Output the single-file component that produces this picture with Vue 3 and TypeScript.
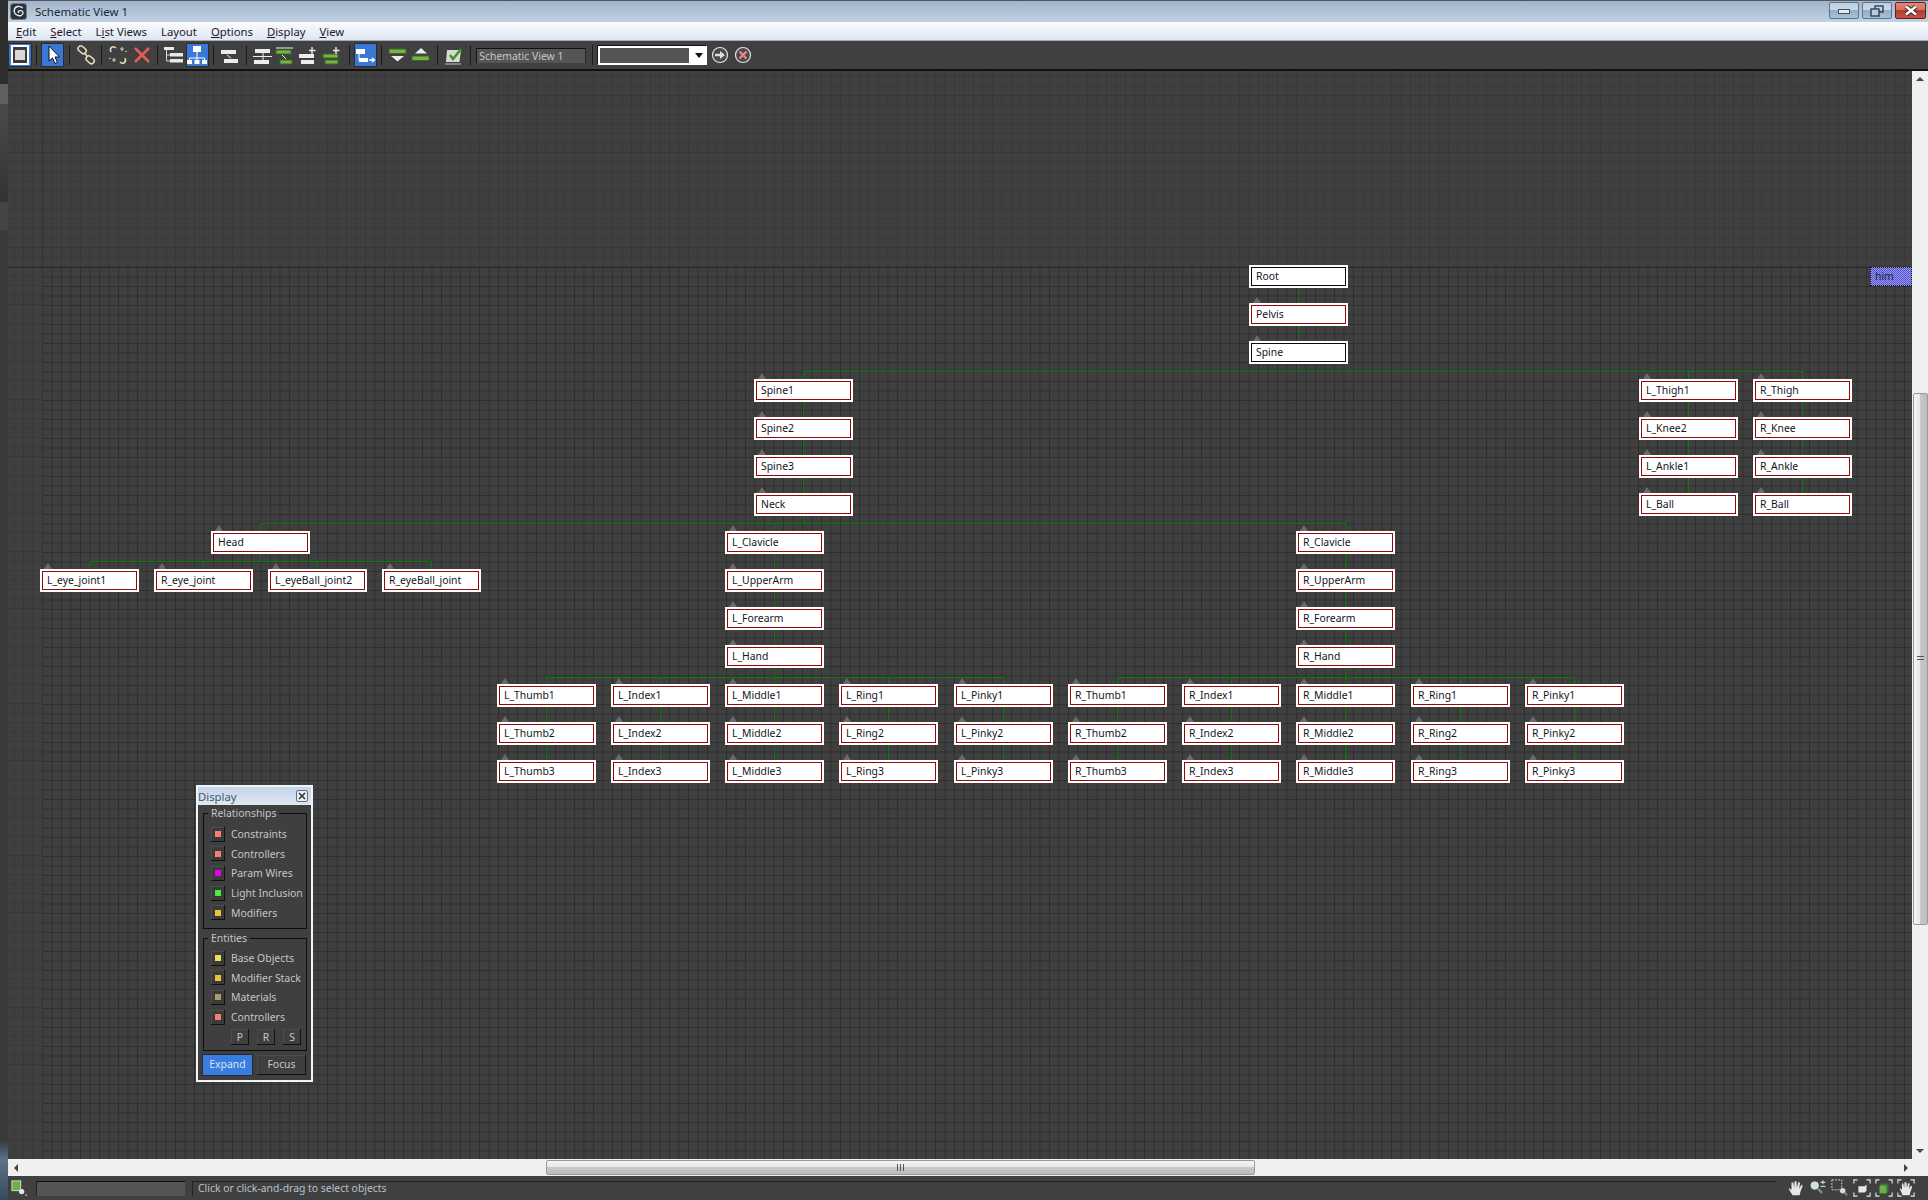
<script setup lang="ts">
interface SchematicNode {
  name: string
  x: number
  row: number
  sel?: boolean
}

// node column pitch is about 114px in the view
const colX = (n: number) => Math.floor(497 + 114.25 * n)
const rows = [265, 303, 341, 379, 417, 455, 493, 531, 569, 607, 645, 684, 722, 760]
const rowY = (k: number) => rows[k]

const nodes: SchematicNode[] = [
  { name: 'Root', x: 1249, row: 0 },
  { name: 'Pelvis', x: 1249, row: 1, sel: true },
  { name: 'Spine', x: 1249, row: 2 },
  { name: 'Spine1', x: 754, row: 3, sel: true },
  { name: 'Spine2', x: 754, row: 4, sel: true },
  { name: 'Spine3', x: 754, row: 5, sel: true },
  { name: 'Neck', x: 754, row: 6, sel: true },
  { name: 'L_Thigh1', x: colX(10), row: 3, sel: true },
  { name: 'L_Knee2', x: colX(10), row: 4, sel: true },
  { name: 'L_Ankle1', x: colX(10), row: 5, sel: true },
  { name: 'L_Ball', x: colX(10), row: 6, sel: true },
  { name: 'R_Thigh', x: colX(11), row: 3, sel: true },
  { name: 'R_Knee', x: colX(11), row: 4, sel: true },
  { name: 'R_Ankle', x: colX(11), row: 5, sel: true },
  { name: 'R_Ball', x: colX(11), row: 6, sel: true },
  { name: 'Head', x: colX(-2.5), row: 7, sel: true },
  { name: 'L_eye_joint1', x: colX(-4), row: 8, sel: true },
  { name: 'R_eye_joint', x: colX(-3), row: 8, sel: true },
  { name: 'L_eyeBall_joint2', x: colX(-2), row: 8, sel: true },
  { name: 'R_eyeBall_joint', x: colX(-1), row: 8, sel: true },
  { name: 'L_Clavicle', x: colX(2), row: 7, sel: true },
  { name: 'L_UpperArm', x: colX(2), row: 8, sel: true },
  { name: 'L_Forearm', x: colX(2), row: 9, sel: true },
  { name: 'L_Hand', x: colX(2), row: 10, sel: true },
  { name: 'R_Clavicle', x: colX(7), row: 7, sel: true },
  { name: 'R_UpperArm', x: colX(7), row: 8, sel: true },
  { name: 'R_Forearm', x: colX(7), row: 9, sel: true },
  { name: 'R_Hand', x: colX(7), row: 10, sel: true },
]

const fingers = ['L_Thumb', 'L_Index', 'L_Middle', 'L_Ring', 'L_Pinky', 'R_Thumb', 'R_Index', 'R_Middle', 'R_Ring', 'R_Pinky']
fingers.forEach((f, i) => {
  for (let j = 0; j < 3; j++) {
    nodes.push({ name: f + (j + 1), x: colX(i), row: 11 + j, sel: true })
  }
})

// canvas starts at 8,71 so everything is shifted by that
const nodeStyle = (n: SchematicNode) => ({
  left: n.x - 8 + 'px',
  top: rowY(n.row) - 71 + 'px',
})

interface Wire {
  x: number
  y: number
  w: number
  h: number
}

const wires: Wire[] = []
const center = (x: number) => x + 49

// vertical links inside each chain
const vLink = (x: number, from: number, to: number) => {
  wires.push({ x: center(x), y: rowY(from) + 23, w: 1, h: rowY(to) - rowY(from) - 23 })
}

// parent drops onto a horizontal bus, children hang off it
const fan = (parentX: number, parentRow: number, childXs: number[], childRow: number, offset: number) => {
  const busY = rowY(parentRow) + offset
  const xs = [...childXs].sort((a, b) => a - b)
  wires.push({ x: center(parentX), y: rowY(parentRow) + 23, w: 1, h: offset - 23 })
  wires.push({ x: center(xs[0]), y: busY, w: xs[xs.length - 1] - xs[0] + 1, h: 1 })
  xs.forEach((x) => wires.push({ x: center(x), y: busY, w: 1, h: rowY(childRow) - busY }))
}

vLink(1249, 0, 1)
vLink(1249, 1, 2)
;[754, colX(10), colX(11)].forEach((x) => [3, 4, 5].forEach((k) => vLink(x, k, k + 1)))
;[colX(2), colX(7)].forEach((x) => [7, 8, 9].forEach((k) => vLink(x, k, k + 1)))
for (let i = 0; i < 10; i++) {
  vLink(colX(i), 11, 12)
  vLink(colX(i), 12, 13)
}
fan(1249, 2, [754, colX(10), colX(11)], 3, 30)
fan(754, 6, [colX(-2.5), colX(2), colX(7)], 7, 30)
fan(colX(-2.5), 7, [colX(-4), colX(-3), colX(-2), colX(-1)], 8, 30)
fan(colX(2), 10, [0, 1, 2, 3, 4].map(colX), 11, 32)
fan(colX(7), 10, [5, 6, 7, 8, 9].map(colX), 11, 32)

const wireStyle = (w: Wire) => ({
  left: w.x - 8 + 'px',
  top: w.y - 71 + 'px',
  width: w.w + 'px',
  height: w.h + 'px',
})

const relationships = [
  { label: 'Constraints', color: '#f97c74' },
  { label: 'Controllers', color: '#f97c74' },
  { label: 'Param Wires', color: '#e800e8' },
  { label: 'Light Inclusion', color: '#44f03c' },
  { label: 'Modifiers', color: '#e8c238' },
]

const entities = [
  { label: 'Base Objects', color: '#ecdc60' },
  { label: 'Modifier Stack', color: '#e8c238' },
  { label: 'Materials', color: '#a89a6c' },
  { label: 'Controllers', color: '#f97c74' },
]

const menus = [
  { key: 'E', rest: 'dit', pre: '' },
  { key: 'S', rest: 'elect', pre: '' },
  { key: 'i', rest: 'st Views', pre: 'L' },
  { key: '', rest: 'Layout', pre: '' },
  { key: 'O', rest: 'ptions', pre: '' },
  { key: 'D', rest: 'isplay', pre: '' },
  { key: 'V', rest: 'iew', pre: '' },
]
</script>

<template>
  <div class="screen">
    <div class="backdrop"></div>
    <div class="window">
      <div class="titlebar">
        <svg class="app-icon" viewBox="0 0 18 18">
          <rect x="0.5" y="0.5" width="17" height="17" rx="3" fill="#2c3238" stroke="#70808c" />
          <path d="M13.5 5.5 C11 2.5 5 3 4.5 7.5 C4 12 8.5 14.5 12 13 C15 11.5 14 8 11 8 C9 8 8 9.5 9.5 10.5" fill="none" stroke="#e8eef2" stroke-width="1.4" />
        </svg>
        <span class="title">Schematic View 1</span>
        <div class="win-btns">
          <div class="win-btn">
            <svg width="12" height="8" viewBox="0 0 12 8"><rect x="0.5" y="2.5" width="11" height="4" fill="#e8ecf0" stroke="#42505e" /></svg>
          </div>
          <div class="win-btn">
            <svg width="14" height="12" viewBox="0 0 14 12" fill="none" stroke="#34404c" stroke-width="1.4"><rect x="5" y="1" width="8" height="6" /><rect x="1" y="4" width="8" height="7" fill="#b8cde0" /></svg>
          </div>
          <div class="win-btn close">
            <svg width="14" height="11" viewBox="0 0 14 11"><path d="M2 1.5 L12 9.5 M12 1.5 L2 9.5" stroke="#3a2020" stroke-width="4.4" /><path d="M2 1.5 L12 9.5 M12 1.5 L2 9.5" stroke="#fff" stroke-width="2.6" /></svg>
          </div>
        </div>
      </div>

      <div class="menubar">
        <span v-for="m in menus" :key="m.rest" class="menu-item">{{ m.pre }}<u v-if="m.key">{{ m.key }}</u>{{ m.rest }}</span>
      </div>

      <div class="toolbar">
        <button class="tool on">
          <svg viewBox="0 0 24 24"><rect x="4" y="3" width="16" height="18" fill="#3c3c3c" stroke="#fff" stroke-width="2" /><rect x="7" y="7" width="10" height="10" fill="#d8d8d8" /></svg>
        </button>
        <i class="sep"></i>
        <button class="tool on">
          <svg viewBox="0 0 24 24"><path d="M8 3 L8 18 L11.5 15 L14 20.5 L16.5 19.5 L14 14 L18.5 14 Z" fill="#fff" stroke="#111" /></svg>
        </button>
        <i class="sep"></i>
        <button class="tool">
          <svg viewBox="0 0 24 24" fill="none" stroke="#e8dcbc" stroke-width="1.5"><rect x="3.5" y="4" width="9" height="5.5" rx="2.7" transform="rotate(40 8 7)" /><rect x="11.5" y="14" width="9" height="5.5" rx="2.7" transform="rotate(40 16 17)" /><path d="M10.5 9.5 L13.5 14" /></svg>
        </button>
        <i class="sep"></i>
        <button class="tool">
          <svg viewBox="0 0 24 24" fill="none" stroke="#e8dcbc" stroke-width="1.5"><path d="M10 5 C7 2 3 5 5 9" /><path d="M14 19 C17 22 21 19 19 15" /><path d="M4 15 L4 16 M20 8 L20 9" /><path d="M14 6 h4 M16 4 v4 M6 17 h4 M8 15 v4" stroke="#c8c8c8" stroke-width="1.2" /></svg>
        </button>
        <button class="tool">
          <svg viewBox="0 0 24 24"><path d="M5 5 L19 19 M19 5 L5 19" stroke="#e65c5c" stroke-width="2.6" /></svg>
        </button>
        <i class="sep"></i>
        <button class="tool">
          <svg viewBox="0 0 24 24"><path d="M4.5 6 V18 H8 M4.5 12 H8" stroke="#d8d8d8" fill="none" /><rect x="2" y="4" width="10" height="3" fill="#e8e8e8" /><rect x="8" y="10" width="13" height="3.5" fill="#e8e8e8" /><rect x="8" y="16" width="13" height="3.5" fill="#e8e8e8" /></svg>
        </button>
        <button class="tool on">
          <svg viewBox="0 0 24 24"><path d="M12 8 V15 M4.5 18 V15 H19.5 V18 M12 15 V18" stroke="#fff" fill="none" /><rect x="8" y="3" width="8" height="6" fill="#fff" /><rect x="2" y="17" width="5" height="4" fill="#fff" /><rect x="9.5" y="17" width="5" height="4" fill="#fff" /><rect x="17" y="17" width="5" height="4" fill="#fff" /></svg>
        </button>
        <i class="sep"></i>
        <button class="tool">
          <svg viewBox="0 0 24 24"><rect x="3" y="7" width="15" height="4" fill="#ececec" /><rect x="6" y="16" width="14" height="4" fill="#ececec" /><path d="M9 12 L13 15" stroke="#ececec" /></svg>
        </button>
        <i class="sep"></i>
        <button class="tool">
          <svg viewBox="0 0 24 24"><rect x="4" y="6" width="15" height="4" fill="#ececec" /><path d="M2 13.5 H21" stroke="#ececec" /><path d="M12 10 V17" stroke="#ececec" /><rect x="3" y="17" width="15" height="4" fill="#ececec" /></svg>
        </button>
        <button class="tool">
          <svg viewBox="0 0 24 24"><path d="M2 5 H19" stroke="#ececec" /><rect x="2" y="7" width="15" height="4" fill="#7fb048" stroke="#2f6a20" /><path d="M8 12 L12 16" stroke="#ececec" /><rect x="6" y="17" width="12" height="4" fill="#7fb048" stroke="#2f6a20" /></svg>
        </button>
        <button class="tool">
          <svg viewBox="0 0 24 24"><rect x="2" y="11" width="15" height="4" fill="#ececec" /><rect x="4" y="17" width="13" height="4" fill="#ececec" /><path d="M15 4 V11 M12 7.5 H18.5" stroke="#ececec" stroke-width="1.4" /></svg>
        </button>
        <button class="tool">
          <svg viewBox="0 0 24 24"><rect x="2" y="11" width="15" height="4" fill="#7fb048" stroke="#2f6a20" /><rect x="4" y="17" width="13" height="4" fill="#7fb048" stroke="#2f6a20" /><path d="M15 4 V11 M12 7.5 H18.5" stroke="#ececec" stroke-width="1.4" /></svg>
        </button>
        <i class="sep"></i>
        <button class="tool on">
          <svg viewBox="0 0 24 24"><rect x="3" y="6" width="9" height="5" fill="#fff" /><path d="M6 11 V17" stroke="#fff" /><rect x="6" y="15" width="9" height="4" fill="#fff" /><path d="M16 17 H21 M19 15 L21.5 17 L19 19" fill="none" stroke="#fff" stroke-width="1.4" /></svg>
        </button>
        <i class="sep"></i>
        <button class="tool">
          <svg viewBox="0 0 24 24"><rect x="3" y="6" width="17" height="4.5" fill="#7fb048" stroke="#2f6a20" /><path d="M5 13 H18 L11.5 18.5 Z" fill="#ececec" /></svg>
        </button>
        <button class="tool">
          <svg viewBox="0 0 24 24"><path d="M12 5 L18 10.5 H6 Z" fill="#ececec" /><rect x="3" y="13" width="17" height="4.5" fill="#7fb048" stroke="#2f6a20" /></svg>
        </button>
        <i class="sep"></i>
        <button class="tool">
          <svg viewBox="0 0 24 24"><path d="M5 7 H19 L17.5 19 H4 Z" fill="#d8d8d8" /><path d="M3 21 H19" stroke="#bcbcbc" /><path d="M8 12 L11 16 L19 6" fill="none" stroke="#2f9a1c" stroke-width="2.4" /></svg>
        </button>
        <i class="sep"></i>
        <div class="name-field">Schematic View 1</div>
        <i class="sep"></i>
        <div class="combo">
          <div class="combo-inner"></div>
          <div class="combo-arrow"></div>
        </div>
        <svg class="round-btn" viewBox="0 0 18 18"><circle cx="9" cy="9" r="7.5" fill="#4a4a4a" stroke="#e4e4e4" stroke-width="1.2" /><path d="M4 7.7 H9 V5 L14 9 L9 13 V10.3 H4 Z" fill="#ddd" /></svg>
        <svg class="round-btn" viewBox="0 0 18 18"><circle cx="9" cy="9" r="7.5" fill="#4a4a4a" stroke="#e4e4e4" stroke-width="1.2" /><path d="M5.5 5.5 L12.5 12.5 M12.5 5.5 L5.5 12.5" stroke="#f08080" stroke-width="2.4" /></svg>
      </div>

      <div class="view-row">
        <div class="canvas">
          <div class="grid-faint"></div>
          <div class="grid-strong"></div>
          <div class="axis-h"></div>
          <div class="axis-v"></div>
          <div v-for="(w, i) in wires" :key="i" class="wire" :style="wireStyle(w)"></div>
          <div v-for="n in nodes" :key="n.name" class="node" :class="{ selected: n.sel, root: n.name === 'Root' }" :style="nodeStyle(n)">{{ n.name }}</div>
          <div class="him">him</div>

          <div class="display-panel">
            <div class="panel-title">
              <span>Display</span>
              <div class="panel-close">
                <svg width="8" height="8" viewBox="0 0 8 8"><path d="M1 1 L7 7 M7 1 L1 7" stroke="#333" stroke-width="1.6" /></svg>
              </div>
            </div>
            <div class="panel-body">
              <fieldset class="group">
                <legend>Relationships</legend>
                <div v-for="r in relationships" :key="r.label" class="rel-row">
                  <span class="swatch"><b :style="{ background: r.color }"></b></span>
                  <span>{{ r.label }}</span>
                </div>
              </fieldset>
              <fieldset class="group entities">
                <legend>Entities</legend>
                <div v-for="r in entities" :key="r.label" class="rel-row">
                  <span class="swatch"><b :style="{ background: r.color }"></b></span>
                  <span>{{ r.label }}</span>
                </div>
                <div class="prs">
                  <span class="prs-btn">P</span>
                  <span class="prs-btn">R</span>
                  <span class="prs-btn">S</span>
                </div>
              </fieldset>
              <div class="panel-actions">
                <div class="act on">Expand</div>
                <div class="act">Focus</div>
              </div>
            </div>
          </div>
        </div>
        <div class="vscroll">
          <div class="arrow-up"></div>
          <div class="vthumb"><div class="v-grip"></div></div>
          <div class="arrow-down"></div>
        </div>
      </div>

      <div class="hscroll">
        <div class="arrow-left"></div>
        <div class="hthumb"><div class="h-grip"></div></div>
        <div class="arrow-right"></div>
      </div>

      <div class="statusbar">
        <svg class="status-icon" viewBox="0 0 18 18"><rect x="1" y="1" width="10" height="11" fill="#6cb04c" stroke="#d8e8c8" /><circle cx="12" cy="13" r="3" fill="#e8e8e8" /><circle cx="17" cy="17" r="1" fill="#ccc" /></svg>
        <div class="progress"></div>
        <div class="prompt">Click or click-and-drag to select objects</div>
        <div class="nav-icons">
          <svg viewBox="0 0 20 20"><path d="M6 18 C4 14 2 12 2 10 L5 12 L5 4 L7 4 L8 10 L8.5 2.5 L10.5 2.5 L11 10 L12.5 3.5 L14.5 4 L13.5 11 L16 6.5 L17.5 7.5 L15 14 L14 18 Z" fill="#e8e8e8" /></svg>
          <svg viewBox="0 0 22 20"><circle cx="7" cy="7" r="5" fill="#cfe0e0" /><path d="M11 11 L16 16" stroke="#8a8a8a" stroke-width="3" /><path d="M14 3 H20 M17 0.5 V5.5 M14 8 H20" stroke="#e8e8e8" stroke-width="1.2" /></svg>
          <svg viewBox="0 0 20 20"><rect x="1" y="1" width="11" height="11" fill="none" stroke="#e8e8e8" stroke-dasharray="2 1.5" /><circle cx="13" cy="13" r="3" fill="#cfe0e0" /><path d="M15 15 L18 18" stroke="#8a8a8a" stroke-width="2" /></svg>
          <svg viewBox="0 0 20 20"><path d="M1 5 V1 H5 M15 1 H19 V5 M19 15 V19 H15 M5 19 H1 V15" fill="none" stroke="#e8e8e8" stroke-width="1.2" /><path d="M6 8 L13 8 L15 6 V13 L13 15 H6 Z" fill="#e4e8f0" /></svg>
          <svg viewBox="0 0 20 20"><path d="M1 5 V1 H5 M15 1 H19 V5 M19 15 V19 H15 M5 19 H1 V15" fill="none" stroke="#e8e8e8" stroke-width="1.2" /><path d="M5 7 H13 V16 H5 Z" fill="#6cb04c" /><path d="M5 7 L7 5 H15 L13 7 Z M13 7 L15 5 V14 L13 16 Z" fill="#3c7a2c" /></svg>
          <svg viewBox="0 0 20 20"><path d="M1 5 V1 H5 M15 1 H19 V5 M19 15 V19 H15 M5 19 H1 V15" fill="none" stroke="#e8e8e8" stroke-width="1.2" /><path d="M6 18 C5 14 3 12 3 10 L5.5 12 L5.5 5 L7 5 L8 10 L8.5 3.5 L10.5 3.5 L11 10 L12.5 4.5 L14 5 L13.5 11 L15.5 7.5 L17 8.5 L15 14 L14 18 Z" fill="#e8e8e8" /></svg>
        </div>
      </div>
    </div>
  </div>
</template>

<style scoped>
.screen {
  display: flex;
  width: 1928px;
  height: 1200px;
  overflow: hidden;
  font-family: "Noto Sans", "DejaVu Sans", sans-serif;
  font-size: 10.4px;
}

.backdrop {
  width: 8px;
  flex-shrink: 0;
  background: linear-gradient(to bottom, #2e2e2e 0, #2e2e2e 84px, #606060 84px, #606060 104px, #4a4a4a 104px, #333 200px, #333 202px, #444 202px, #444 230px, #3a3a3a 230px, #3a3a3a 1140px, #5c7288 1160px, #38485a 1200px);
}

.window {
  flex: 1;
  display: flex;
  flex-direction: column;
  min-width: 0;
}

.titlebar {
  height: 22px;
  display: flex;
  align-items: center;
  background: linear-gradient(to bottom, #9fb4cc 0, #c2d2e4 100%);
  border-top: 1px solid #555;
  box-sizing: border-box;
  padding-left: 2px;
}

.app-icon {
  width: 17px;
  height: 17px;
}

.title {
  margin-left: 8px;
  font-size: 11.5px;
  color: #1c2834;
}

.win-btns {
  margin-left: auto;
  display: flex;
  gap: 3px;
  padding-right: 2px;
  align-self: flex-start;
  padding-top: 1px;
}

.win-btn {
  width: 30px;
  height: 17px;
  box-sizing: border-box;
  display: flex;
  align-items: center;
  justify-content: center;
  border: 1px solid #5c7488;
  border-radius: 2px;
  background: linear-gradient(to bottom, #bcd0e4 0, #c8d8e8 45%, #94aec6 50%, #a8c0d6 100%);
}

.win-btn.close {
  width: 31px;
  border-color: #5e2020;
  background: linear-gradient(to bottom, #e08878 0, #d87060 45%, #b03c2c 50%, #c45444 100%);
}

.menubar {
  height: 19px;
  display: flex;
  align-items: center;
  gap: 14px;
  padding-left: 8px;
  background: linear-gradient(to bottom, #fafcfe 0, #dfe5f2 100%);
  border-bottom: 1px solid #a8a8b8;
  box-sizing: border-box;
  font-size: 11.3px;
  color: #1a1a2a;
}

.toolbar {
  height: 28px;
  display: flex;
  align-items: center;
  background: #404040;
  padding-left: 0.4px;
  box-sizing: border-box;
}

.tool {
  width: 23.2px;
  height: 24px;
  padding: 0;
  margin: 0;
  border: none;
  background: transparent;
  display: flex;
  align-items: center;
  justify-content: center;
  flex-shrink: 0;
  position: relative;
}

.tool svg {
  width: 24px;
  height: 24px;
  position: absolute;
  left: 50%;
  top: 50%;
  transform: translate(-50%, -50%);
}

.tool.on::before {
  content: "";
  position: absolute;
  left: 1px;
  right: 1px;
  top: 1px;
  bottom: 1px;
  background: #3a78d8;
  box-shadow: 0 0 0 1px #2c2c2c;
}

.sep {
  width: 1px;
  height: 20px;
  background: #1c1c1c;
  margin: 0 4.3px;
  flex-shrink: 0;
}

.name-field {
  width: 110px;
  height: 15px;
  line-height: 14px;
  box-sizing: border-box;
  padding-left: 2px;
  background: #555;
  border-top: 1px solid #111;
  border-left: 1px solid #111;
  border-right: 1px solid #2a2a2a;
  color: #c0c8d0;
  font-size: 10.4px;
  margin: 0 1px;
}

.combo {
  width: 109px;
  height: 19px;
  display: flex;
  align-items: stretch;
  background: #fff;
  border: 2px solid #fff;
  box-sizing: border-box;
  box-shadow: -1px -1px 0 #111;
  margin-left: 1px;
  position: relative;
}

.combo-inner {
  width: 89px;
  background: #555;
}

.combo-arrow {
  flex: 1;
  position: relative;
}

.combo-arrow::after {
  content: "";
  position: absolute;
  left: 6px;
  top: 5px;
  border-left: 4px solid transparent;
  border-right: 4px solid transparent;
  border-top: 5px solid #111;
}

.round-btn {
  width: 18px;
  height: 18px;
  margin-left: 4px;
  flex-shrink: 0;
}

.round-btn:last-child {
  margin-left: 5px;
}

.view-row {
  height: 1088px;
  border-top: 2px solid #111;
  display: flex;
}

.canvas {
  flex: 1;
  position: relative;
  background: #3f3f3f;
  overflow: hidden;
}

.grid-faint {
  position: absolute;
  inset: 0;
  background-image:
    linear-gradient(to right, #383838 1px, transparent 1px),
    linear-gradient(to bottom, #383838 1px, transparent 1px);
  background-size: 9.5px 9.5px;
  background-position: 5.5px 5px;
}

.grid-strong {
  position: absolute;
  left: 34px;
  top: 196px;
  right: 0;
  bottom: 0;
  background-image:
    linear-gradient(to right, #2f2f2f 1px, transparent 1px),
    linear-gradient(to bottom, #2f2f2f 1px, transparent 1px);
  background-size: 9.5px 9.5px;
  background-color: #3f3f3f;
}

.axis-h {
  position: absolute;
  left: 0;
  right: 0;
  top: 196px;
  height: 1px;
  background: #2c2c2c;
}

.axis-v {
  position: absolute;
  left: 34px;
  top: 0;
  bottom: 0;
  width: 1px;
  background: #333;
}

.wire {
  position: absolute;
  background: #0b7a0b;
}

.node {
  position: absolute;
  width: 99px;
  height: 23px;
  box-sizing: border-box;
  background: #fff;
  border: 2px solid #fff;
  box-shadow: inset 0 0 0 1px #0c0c0c;
  padding-left: 5px;
  line-height: 18px;
  font-size: 10.4px;
  color: #14141c;
  white-space: nowrap;
}

.node::before {
  content: "";
  position: absolute;
  left: 2px;
  top: -8px;
  border-left: 4px solid transparent;
  border-right: 4px solid transparent;
  border-bottom: 6px solid #6a6a6a;
}

.node.root::before {
  display: none;
}

.node.selected {
  box-shadow: inset 0 0 0 1px #960606;
}

.him {
  position: absolute;
  left: 1862px;
  top: 196px;
  width: 42px;
  height: 19px;
  box-sizing: border-box;
  border: 1px dotted #111;
  padding-left: 4px;
  line-height: 17px;
  font-size: 10.4px;
  color: #22223a;
  background: repeating-conic-gradient(#5a5ad4 0 25%, #9292e8 0 50%) 0 0 / 2px 2px;
}

.display-panel {
  position: absolute;
  left: 188px;
  top: 714px;
  width: 117px;
  height: 297px;
  box-sizing: border-box;
  border: 2px solid #f0f4f8;
  background: #3f3f3f;
  display: flex;
  flex-direction: column;
  color: #c6c6c6;
}

.panel-title {
  height: 18px;
  flex-shrink: 0;
  display: flex;
  align-items: center;
  justify-content: space-between;
  padding: 0 3px 0 0;
  background: linear-gradient(to bottom, #c4d4e8, #dfe8f2);
  color: #46586c;
  font-size: 11.3px;
}

.panel-close {
  width: 12px;
  height: 12px;
  box-sizing: border-box;
  display: flex;
  align-items: center;
  justify-content: center;
  border: 1px solid #5c7088;
  border-radius: 2px;
  background: #e8eef4;
}

.panel-body {
  flex: 1;
  padding: 1.5px 4px 0 5px;
  display: flex;
  flex-direction: column;
}

.group {
  margin: 0;
  padding: 5px 0 0 7px;
  border: 1px solid #0c0c0c;
  height: 122px;
  box-sizing: border-box;
  min-width: 0;
}

.group.entities {
  margin-top: 3px;
  padding-top: 4px;
  height: 119.5px;
}

.group legend {
  margin-left: -3px;
  padding: 0 3px;
  font-size: 10.4px;
  line-height: 13px;
  height: 13px;
  color: #c6c6c6;
}

.rel-row {
  height: 19.6px;
  display: flex;
  align-items: center;
  gap: 6px;
  font-size: 10.4px;
  white-space: nowrap;
}

.swatch {
  width: 14px;
  height: 15px;
  flex-shrink: 0;
  display: flex;
  align-items: center;
  justify-content: center;
  background: #3a3a3a;
  box-shadow: inset -1px -1px 0 #111, inset 1px 1px 0 #4c4c4c;
}

.swatch b {
  width: 6px;
  height: 6px;
  display: block;
}

.prs {
  display: flex;
  gap: 8px;
  margin-top: 2px;
  padding-left: 20px;
}

.prs-btn {
  width: 18px;
  height: 16px;
  line-height: 16px;
  text-align: center;
  box-shadow: inset -1px -1px 0 #111, inset 1px 1px 0 #4c4c4c;
  font-size: 10.4px;
}

.panel-actions {
  margin-top: 4px;
  display: flex;
  gap: 5px;
}

.act {
  width: 49px;
  height: 20px;
  line-height: 19px;
  text-align: center;
  box-sizing: border-box;
  font-size: 10.4px;
  box-shadow: inset -1px -1px 0 #111, inset 1px 1px 0 #4c4c4c;
}

.act.on {
  background: #3a7de0;
  color: #d8e4f4;
  box-shadow: 0 0 0 1px #2a2a2a;
}

.vscroll {
  width: 16px;
  flex-shrink: 0;
  background: #f0f0f0;
  position: relative;
}

.arrow-up,
.arrow-down,
.arrow-left,
.arrow-right {
  position: absolute;
  width: 0;
  height: 0;
}

.arrow-up {
  left: 4px;
  top: 6px;
  border-left: 4px solid transparent;
  border-right: 4px solid transparent;
  border-bottom: 4px solid #444;
}

.arrow-down {
  left: 4px;
  bottom: 6px;
  border-left: 4px solid transparent;
  border-right: 4px solid transparent;
  border-top: 4px solid #444;
}

.vthumb {
  position: absolute;
  left: 1px;
  right: 0;
  top: 322px;
  height: 532px;
  box-sizing: border-box;
  border: 1px solid #9a9a9a;
  border-radius: 2px;
  background: linear-gradient(to right, #f4f4f4 0, #e8e8e8 45%, #c8c8c8 50%, #bcbcbc 100%);
  display: flex;
  align-items: center;
  justify-content: center;
}

.v-grip {
  width: 7px;
  height: 6px;
  background: repeating-linear-gradient(to bottom, #555 0 1px, transparent 1px 3px);
}

.hscroll {
  height: 17px;
  background: #f0f0f0;
  position: relative;
}

.arrow-left {
  left: 6px;
  top: 5px;
  border-top: 4px solid transparent;
  border-bottom: 4px solid transparent;
  border-right: 4px solid #444;
}

.arrow-right {
  right: 20px;
  top: 5px;
  border-top: 4px solid transparent;
  border-bottom: 4px solid transparent;
  border-left: 4px solid #444;
}

.hthumb {
  position: absolute;
  left: 538px;
  width: 709px;
  top: 1px;
  bottom: 1px;
  box-sizing: border-box;
  border: 1px solid #9a9a9a;
  border-radius: 2px;
  background: linear-gradient(to bottom, #f4f4f4 0, #e8e8e8 45%, #c8c8c8 50%, #bcbcbc 100%);
  display: flex;
  align-items: center;
  justify-content: center;
}

.h-grip {
  width: 7px;
  height: 7px;
  background: repeating-linear-gradient(to right, #555 0 1px, transparent 1px 3px);
}

.statusbar {
  flex: 1;
  display: flex;
  align-items: center;
  background: #404040;
  position: relative;
}

.status-icon {
  width: 16px;
  height: 16px;
  margin-left: 3px;
}

.progress {
  width: 149px;
  height: 15px;
  margin-left: 9px;
  background: #555;
  border-top: 1px solid #111;
  border-left: 1px solid #222;
  box-sizing: border-box;
}

.prompt {
  width: 1585px;
  height: 15px;
  margin-left: 7px;
  padding-left: 5px;
  box-sizing: border-box;
  border-top: 1px solid #222;
  border-left: 1px solid #222;
  line-height: 13px;
  font-size: 10.4px;
  color: #b8c2cc;
}

.nav-icons {
  display: flex;
  align-items: center;
  gap: 4px;
  margin-left: 10px;
}

.nav-icons svg {
  width: 18px;
  height: 18px;
}
</style>
